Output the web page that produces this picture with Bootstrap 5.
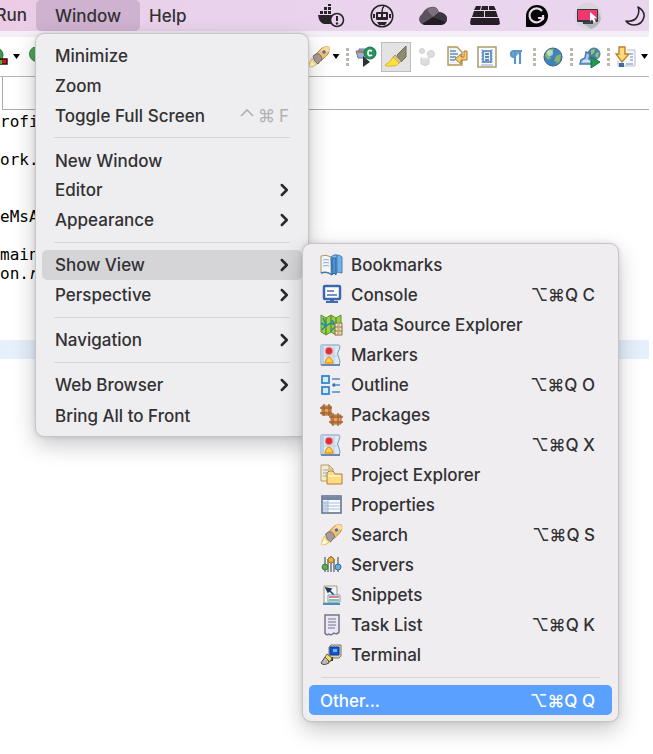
<!DOCTYPE html>
<html lang="en">
<head>
<meta charset="utf-8">
<meta name="viewport" content="width=device-width, initial-scale=1">
<title>Window menu</title>
<link href="https://cdn.jsdelivr.net/npm/bootstrap@5.3.0/dist/css/bootstrap.min.css" rel="stylesheet">
<style>
body{font-family:Inter,"Liberation Sans",sans-serif;font-size:17px;font-weight:500;line-height:30px;color:#323133;background:#fff;padding-right:4px;min-height:100vh}
svg{display:block;flex:none}
button{color:inherit;font-weight:inherit}
.menubar{height:31px;background:linear-gradient(90deg,#eccbe5,#e9d3ec 35%,#ead6ee)}
.menubar .top-item{border:0;background:none;padding:0;height:31px;line-height:30px}
.top-run{width:36px;padding-right:9px!important;overflow:hidden}
.top-window{width:104px;background:#cfb1d0!important;border-radius:5px}
.top-help{padding-left:9px!important}
.status-icons{display:grid;grid-template-columns:52px 50px 52px 52px 52px 50px 36px;align-items:center;justify-items:center;height:31px}
.status-icons button,.toolbar button{border:0;background:none;padding:0}
.status-icons button:last-child{justify-self:end;margin-right:2px}
.title-strip{height:6px;background:#f4eef6}
.toolbar{height:40px;border-bottom:1px solid #b5b5b5}
.tools{display:grid;grid-template-columns:22px 12px 10px 28px 32px 30px 30px 30px 27px 10px 28px 8px 29px 8px 28px 9px;align-items:center;justify-items:center}
.tools .pressed{width:30px;height:30px;background:#e3e3e3;border:1px solid #bdbdbd;padding:3px}
.dots{width:3px;height:18px;background:repeating-linear-gradient(#bdb8ae 0 3px,transparent 3px 5px)}
.caret{width:7px;height:5px;background:#000;clip-path:polygon(0 0,100% 0,50% 100%)}
.tab-area{height:33px;margin-left:2px;border-left:1px solid #aaa;border-bottom:1px solid #aaa}
.code{font-family:"DejaVu Sans Mono",monospace;font-size:16px;font-weight:400;line-height:19px;color:#000;margin:0;padding-top:2px}
.code div{height:19px;white-space:pre}
.code .current{background:#e6f0fc}
.dropdown-menu.mac{--bs-dropdown-bg:#eeedf0;display:block;margin:0;padding:6px;border:1px solid #c6c4c7;border-radius:9px;font-size:17px;color:#323133;box-shadow:0 8px 22px rgba(0,0,0,.22),0 0 5px rgba(0,0,0,.10)}
.mac.main-menu{top:100%;left:-1px;width:274px;margin-top:2px}
.mac.sub-menu{--bs-dropdown-bg:#efedf0;top:-7px;left:100%;width:317px}
.mac .dropdown-item{height:30px;line-height:32px;padding:0 13px;border-radius:5px;color:#323133;font-weight:500}
.mac .dropdown-item.open-item{background:#d5d5d7}
.sub-menu .dropdown-item{padding:0 17px 0 11px}
.mac .dropdown-item.chosen{background:#5aa1ff;color:#fff}
.mac .dropdown-divider{margin:7px 12px;border-top:1px solid #d5d4d7;opacity:1}
.item-icon{margin-right:8px}
.faint{color:#b1b0b3;font-weight:400}
</style>
<script src="https://cdn.jsdelivr.net/npm/bootstrap@5.3.0/dist/js/bootstrap.bundle.min.js"></script>
</head>
<body>
<svg width="0" height="0" class="position-absolute" aria-hidden="true">
  <symbol id="rocket" viewBox="0 0 22 22"><path d="M7 9 14 2q4-2 7-1 1 4-1 7l-7 7z" fill="#f4c172" stroke="#c08a3e"/><path d="M12 5 16 1q3-1 5 0 1 3 0 5z" fill="#fbdc9a"/><circle cx="16" cy="6" r="1.700" fill="#466fb5"/><path d="M5 10q3-3 6-2 3 2 3 5l-4 5q-4-2-5-8z" fill="#a79c98" stroke="#76707a"/><path d="M4 12q1 4 5 6-3 3-8 3 0-5 3-9z" fill="#fff2a4" stroke="#e9c15c"/><path d="m4 16-3 5 5-2z" fill="#fff"/></symbol>
  <symbol id="marker" viewBox="0 0 23 22"><path d="M1 1h18q2 1 0 5-3 4 0 8 2 5 0 7H1z" fill="#dceaf6" stroke="#7b9abf"/><path d="M1 1h3v20H1z" fill="#b8d0e6"/><path d="M4 12h13M14 2v18" stroke="#b7cde0"/><path d="M1 21h19" stroke="#54759f" stroke-width="1.500"/><circle cx="9" cy="7" r="3.800" fill="#e02d38" stroke="#f08d91"/><path d="M9 13q-3 1-4 6h8q-1-5-4-6z" fill="#ffd34a" stroke="#ef9422" stroke-width="1.300" stroke-linejoin="round"/></symbol>
  <symbol id="chev" viewBox="0 0 9 14"><path d="m1.800 2 5 5-5 5" fill="none" stroke="#29282a" stroke-width="2.500" stroke-linecap="round" stroke-linejoin="round"/></symbol>
</svg>

<header class="menubar d-flex justify-content-between">
  <nav class="d-flex" aria-label="Menu bar">
    <button class="top-item top-run d-flex justify-content-end">Run</button>
    <div class="position-relative">
      <button class="top-item top-window text-center" aria-expanded="true">Window</button>
      <ul class="dropdown-menu mac main-menu show">
        <li><button class="dropdown-item">Minimize</button></li>
        <li><button class="dropdown-item">Zoom</button></li>
        <li><button class="dropdown-item d-flex justify-content-between">Toggle Full Screen<span class="faint d-flex gap-1"><svg width="14" height="30" viewBox="0 0 14 30"><path d="m1 16 6-6 6 6" fill="none" stroke="#b1b0b3" stroke-width="1.600"/></svg><span>⌘</span><span>F</span></span></button></li>
        <li><hr class="dropdown-divider"></li>
        <li><button class="dropdown-item">New Window</button></li>
        <li><button class="dropdown-item d-flex justify-content-between align-items-center">Editor<svg width="9" height="14"><use href="#chev"/></svg></button></li>
        <li><button class="dropdown-item d-flex justify-content-between align-items-center">Appearance<svg width="9" height="14"><use href="#chev"/></svg></button></li>
        <li><hr class="dropdown-divider"></li>
        <li class="position-relative">
          <button class="dropdown-item open-item d-flex justify-content-between align-items-center" aria-expanded="true">Show View<svg width="9" height="14"><use href="#chev"/></svg></button>
          <ul class="dropdown-menu mac sub-menu show">
            <li><button class="dropdown-item d-flex align-items-center"><svg class="item-icon" width="23" height="22" viewBox="0 0 23 22"><path d="M1 2q5-2 10 1v17q-4-3-10-1z" fill="#f3f7fb" stroke="#b59659"/><path d="M1 19q6-2 11 2" fill="none" stroke="#3e79b7" stroke-width="1.500"/><path d="M3 6q3-1 6 0M3 9q3-1 6 0M3 12q3-1 6 0" fill="none" stroke="#8bafd2"/><path d="M11 3q3-3 6-2v18l-5 1z" fill="#87b9e6" stroke="#3b79b3"/><path d="M12 4h4v17l-2-2-2 2z" fill="#4b90d2" stroke="#296aaa"/><path d="M17 1q3 0 5 2v16l-5-1z" fill="#72b0e9" stroke="#4783b8"/></svg>Bookmarks</button></li>
            <li><button class="dropdown-item d-flex align-items-center"><svg class="item-icon" width="23" height="22" viewBox="0 0 23 22"><rect x="4" y="2" width="16" height="13" rx="1" fill="#fff" stroke="#3d67ad" stroke-width="2.500"/><path d="M7 7h7M7 11h10" stroke="#4e6ea8" stroke-width="1.500"/><path d="M10 16h4v1h4v2H6v-2h4z" fill="#406bad"/></svg>Console<span class="ms-auto">⌥⌘Q C</span></button></li>
            <li><button class="dropdown-item d-flex align-items-center"><svg class="item-icon" width="23" height="22" viewBox="0 0 23 22"><path d="m1 1 5 3 5-3 5 3 5-3v17l-5 3-5-3-5 3-5-3z" fill="#9bd044" stroke="#5c8f2b"/><path d="M6 4v17M11 1v17M16 4v17" stroke="#5c952f" stroke-width="1.500"/><path d="m1 9 5 3 5-3 5 2M3 4l3 7-4 5M12 6l4 6-5 5" fill="none" stroke="#2588a6" stroke-width="1.500"/><path d="M15 9h7v12h-7z" fill="#f0e4c2" stroke="#8a6c3d"/><path d="M15 13h7M15 17h7" stroke="#8a6c3d"/><path d="M17 11h3M17 15h3M17 19h3" stroke="#b69058"/></svg>Data Source Explorer</button></li>
            <li><button class="dropdown-item d-flex align-items-center"><svg class="item-icon" width="23" height="22"><use href="#marker"/></svg>Markers</button></li>
            <li><button class="dropdown-item d-flex align-items-center"><svg class="item-icon" width="23" height="22" viewBox="0 0 23 22"><g fill="#d3eaf9" stroke="#3787cd" stroke-width="1.800"><rect x="2" y="2" width="7" height="7"/><rect x="2" y="13" width="7" height="7"/></g><path d="M12 5h8M16 11h4M12 18h8" stroke="#478fc6" stroke-width="1.600"/><circle cx="14" cy="11" r="1.800" fill="#2e71ba"/></svg>Outline<span class="ms-auto">⌥⌘Q O</span></button></li>
            <li><button class="dropdown-item d-flex align-items-center"><svg class="item-icon" width="23" height="22" viewBox="0 0 23 22"><g fill="#dfa365" stroke="#a1622c"><path d="M2 2h9v9H2zM11 11h10v9H11z"/><path d="M4 0v12M9 0v12M0 4h12M0 9h12M13 9v13M18 9v13M9 13h14M9 18h14" stroke-width="1.300"/></g></svg>Packages</button></li>
            <li><button class="dropdown-item d-flex align-items-center"><svg class="item-icon" width="23" height="22"><use href="#marker"/></svg>Problems<span class="ms-auto">⌥⌘Q X</span></button></li>
            <li><button class="dropdown-item d-flex align-items-center"><svg class="item-icon" width="23" height="22" viewBox="0 0 23 22"><path d="M1 1h8l4 4v12H1z" fill="#f4edcf" stroke="#b79d62"/><path d="M9 1v4h4" fill="none" stroke="#b79d62"/><path d="M3 6h6M3 9h5M3 12h4" stroke="#84a6c8"/><path d="M7 20V9l2-2h4l2 3h7v10z" fill="#ffdb82" stroke="#b77d36"/><path d="M8 12h13" stroke="#fff0bc" stroke-width="2"/></svg>Project Explorer</button></li>
            <li><button class="dropdown-item d-flex align-items-center"><svg class="item-icon" width="23" height="22" viewBox="0 0 23 22"><rect x="2" y="2" width="19" height="17" fill="#f6fbff" stroke="#65758f" stroke-width="1.600"/><path d="M2 3h19v3H2z" fill="#7587a5"/><path d="M8 6v12M3 9h17M3 12h17M3 15h17" stroke="#aabdd4"/><path d="M3 7h5v11H3z" fill="#a8bed7" opacity=".55"/></svg>Properties</button></li>
            <li><button class="dropdown-item d-flex align-items-center"><svg class="item-icon" width="23" height="22"><use href="#rocket"/></svg>Search<span class="ms-auto">⌥⌘Q S</span></button></li>
            <li><button class="dropdown-item d-flex align-items-center"><svg class="item-icon" width="23" height="22" viewBox="0 0 23 22"><path d="M5 3v15M11 2v16M18 3v15M8 5v13M14 5v13" stroke="#82868f" stroke-width="1.700"/><circle cx="5" cy="13" r="2.900" fill="#62ab4f" stroke="#397e38"/><circle cx="11" cy="6" r="3" fill="#e4b13b" stroke="#9c721f"/><circle cx="18" cy="13" r="3" fill="#6baddd" stroke="#34719d"/></svg>Servers</button></li>
            <li><button class="dropdown-item d-flex align-items-center"><svg class="item-icon" width="23" height="22" viewBox="0 0 23 22"><path d="M4 2h13v17H4z" fill="#eef4f7" stroke="#a99b72"/><path d="m6 4 5 1-3 3zM8 5l6 6" fill="#26385c" stroke="#26385c" stroke-width="1.500"/><path d="M8 11h12v7H8z" fill="#fff" stroke="#71a2c5"/><path d="M9 12h10v2H9z" fill="#e27f8e"/><path d="M9 15h10v2H9z" fill="#82c6a8"/><path d="M3 19h17v2H3z" fill="#4d8dc0"/></svg>Snippets</button></li>
            <li><button class="dropdown-item d-flex align-items-center"><svg class="item-icon" width="23" height="22" viewBox="0 0 23 22"><path d="M5 1h14v17q-2 3-5 1-3 3-5 1-2 2-4-1z" fill="#e9e9f5" stroke="#777487" stroke-width="1.500"/><path d="M8 5h8M8 8h8M8 11h8M8 14h7" stroke="#77758b" stroke-width="1.200"/></svg>Task List<span class="ms-auto">⌥⌘Q K</span></button></li>
            <li><button class="dropdown-item d-flex align-items-center"><svg class="item-icon" width="23" height="22" viewBox="0 0 23 22"><path d="m9 3 2-2h10v11l-2 2H9z" fill="#d9d4bd" stroke="#77776e"/><path d="M10 3h9v8h-9z" fill="#1555d5" stroke="#12358b"/><path d="M13 5h4v3h-4z" fill="#64b9ff"/><path d="M12 13v3H8" fill="none" stroke="#333" stroke-width="2"/><path d="m5 13-4 6q2 3 8 0l-1-4z" fill="#b9b9b7" stroke="#4b4d4e"/><path d="m7 10 5 4-2 4-5-5z" fill="#ecdf67" stroke="#6d6730"/></svg>Terminal</button></li>
            <li><hr class="dropdown-divider"></li>
            <li><button class="dropdown-item chosen d-flex justify-content-between">Other...<span>⌥⌘Q Q</span></button></li>
          </ul>
        </li>
        <li><button class="dropdown-item d-flex justify-content-between align-items-center">Perspective<svg width="9" height="14"><use href="#chev"/></svg></button></li>
        <li><hr class="dropdown-divider"></li>
        <li><button class="dropdown-item d-flex justify-content-between align-items-center">Navigation<svg width="9" height="14"><use href="#chev"/></svg></button></li>
        <li><hr class="dropdown-divider"></li>
        <li><button class="dropdown-item d-flex justify-content-between align-items-center">Web Browser<svg width="9" height="14"><use href="#chev"/></svg></button></li>
        <li><button class="dropdown-item">Bring All to Front</button></li>
      </ul>
    </div>
    <button class="top-item top-help">Help</button>
  </nav>
  <div class="status-icons">
    <button aria-label="Docker"><svg width="28" height="24" viewBox="0 0 28 24"><path d="M1 11h17l2-2 3 2q-7 1-8 5 0 3 1 4H7q-5-1-6-9z" fill="#282329"/><path d="M3 7h3v3H3zM7 7h3v3H7zM11 7h3v3h-3zM7 3h3v3H7zM11 3h3v3h-3zM11 0h3v2h-3z" fill="#282329"/><circle cx="20" cy="16" r="6.500" fill="#e9d3ec" stroke="#282329" stroke-width="1.600"/><path d="M20 12v5" stroke="#282329" stroke-width="2"/><circle cx="20" cy="19.500" r="1.200" fill="#282329"/></svg></button>
    <button aria-label="Assistant"><svg width="24" height="24" viewBox="0 0 24 24"><circle cx="12" cy="12" r="10.800" fill="none" stroke="#282329" stroke-width="1.500"/><path d="M12 8q0-4 2-6" fill="none" stroke="#282329" stroke-width="1.500"/><rect x="6" y="8" width="12" height="8" rx="1" fill="#282329"/><path d="M4 10v4M20 10v4" stroke="#282329" stroke-width="2"/><path d="M8 10h3v3H8zM13 10h3v3h-3z" fill="#ead6ee"/><path d="M7 18h10l-2 3H9z" fill="#282329"/></svg></button>
    <button aria-label="Cloud"><svg width="28" height="20" viewBox="0 0 28 20"><path d="M3 8q3-6 9-7 6-1 8 5 7 1 8 6 0 7-6 7H6q-6-1-6-6 0-3 3-5z" fill="#5c515f"/><path d="M8 4q4-4 9-2 3 2 3 5l-6 4z" fill="#7d7080"/><path d="m14 11 6-5q7 1 8 6 0 3-1 4z" fill="#3d3540"/><path d="m3 18 11-7 13 5q-2 3-5 3H6z" fill="#221d24"/></svg></button>
    <button aria-label="Stack"><svg width="30" height="22" viewBox="0 0 30 22"><path d="M6 1h5l-1 4H4zM12 1h6v4h-7zM19 1h5l2 4h-7zM4 6h10v6H2zM15 6h11l2 6H15zM1 13h28l1 6-2 1H1l-1-2z" fill="#242026"/></svg></button>
    <button aria-label="Grammar checker"><svg width="24" height="24" viewBox="0 0 24 24"><path d="M1 23V12A11 11 0 1 1 12 23z" fill="#050505"/><path d="M17 7a7 7 0 1 0 1 7h-5M18 11v5" fill="none" stroke="#ead6ee" stroke-width="2.200"/></svg></button>
    <button aria-label="Screen sharing"><svg width="28" height="28" viewBox="0 0 28 28"><circle cx="14" cy="14" r="13.500" fill="#d7d5d9"/><path d="m7 20 17-12 3 9q-3 8-10 10z" fill="#aebabc"/><rect x="3" y="7" width="21" height="13" rx="1" fill="#37353f"/><path d="M4 8h19v10H4z" fill="#ee386e"/><path d="M9 20h10v2H9z" fill="#40404a"/><path d="m16 10 7 6-3 .5 2 3-2 1-2-3-2 2z" fill="#fff"/></svg></button>
    <button aria-label="Do not disturb"><svg width="22" height="20" viewBox="0 0 22 20"><path d="M13 1q7 4 6 10-2 8-10 8-5 0-8-4 8 1 11-4 3-5 1-10z" fill="none" stroke="#282329" stroke-width="1.500" stroke-linejoin="round"/></svg></button>
  </div>
</header>
<div class="title-strip"></div>
<main>
  <div class="toolbar d-flex justify-content-between">
    <div class="d-flex align-items-center">
      <button aria-label="Run external tool"><svg width="9" height="20" viewBox="0 0 9 20"><circle cx="-4" cy="8" r="7" fill="#43984c" stroke="#267038"/><path d="M0 12h7v5H0z" fill="#d51418" stroke="#301010" stroke-width="1.500"/><path d="M0 13h2v4H0z" fill="#31bd39"/></svg></button>
      <span class="caret ms-1"></span>
      <button class="ms-2" aria-label="New class"><svg width="18" height="20" viewBox="0 0 18 20"><circle cx="9" cy="7" r="7.500" fill="#4ca65b" stroke="#388543"/><path d="M8 4v7" stroke="#fff" stroke-width="2"/></svg></button>
    </div>
    <div class="tools">
      <button aria-label="Search"><svg width="22" height="22"><use href="#rocket"/></svg></button>
      <span class="caret"></span><span class="dots"></span>
      <button aria-label="Open type"><svg width="22" height="22" viewBox="0 0 22 22"><path d="M1 5h11v7H3zM4 3h7v3H4z" fill="#a1b2ce" stroke="#65789b"/><path d="M1 6h11" stroke="#b27749" stroke-width="1.500"/><circle cx="15" cy="7" r="6" fill="#25965a" stroke="#137044"/><path d="M17 5q-4-2-4 2t4 2" fill="none" stroke="#fff" stroke-width="1.800"/><path d="m8 10 7 6-7 5z" fill="#303136"/></svg></button>
      <button class="pressed" aria-label="Mark occurrences"><svg width="22" height="22" viewBox="0 0 22 22"><path d="m12 9 8-8 1-1v11l-5 5z" fill="#8f8b71" stroke="#6c6959"/><path d="m10 9 6 6-3 3-6-6z" fill="#cfc49d" stroke="#a59567"/><path d="m8 11 6 6q-2 3-6 3H1l-1-1q5-2 8-8z" fill="#ffe13d" stroke="#e0b326"/></svg></button>
      <button aria-label="Breadcrumb" disabled><svg width="18" height="20" viewBox="0 0 18 20"><g fill="#ddd" stroke="#d0d0d0"><circle cx="4" cy="4" r="2.500"/><circle cx="13" cy="7" r="3.500"/><path d="M3 11h8v6q-4 3-8 0z"/></g><path d="M4 11h6" stroke="#fff"/></svg></button>
      <button aria-label="Word wrap"><svg width="22" height="22" viewBox="0 0 22 22"><path d="M2 1h9l5 5v13H2z" fill="#edf4fa" stroke="#b39854" stroke-width="1.400"/><path d="M4 5h6M4 8h8M4 11h6M4 14h5" stroke="#6a8fb8" stroke-width="1.400"/><path d="M18 5h3v9h-6v4l-6-5 6-5v3h3z" fill="#f4ce6d" stroke="#ae7631"/></svg></button>
      <button aria-label="Block selection"><svg width="20" height="22" viewBox="0 0 20 22"><path d="M1 1h18v20H1z" fill="#fff" stroke="#a99b72" stroke-width="1.500"/><path d="M4 4h2M4 7h2M4 10h2M4 13h2M4 16h2M14 4h2M14 7h2M14 10h2M14 13h2M14 16h2M4 19h12" stroke="#8aa6c8" stroke-width="1.200"/><rect x="6" y="5" width="8" height="11" fill="#e1effb" stroke="#477eb5" stroke-width="1.500"/><path d="M8 8h4M8 11h4M8 14h4" stroke="#3c659d" stroke-width="1.300"/></svg></button>
      <button aria-label="Show whitespace"><svg width="14" height="18" viewBox="0 0 14 18"><path d="M13 3H5a3 3 0 0 0 0 6h1M6 3v13M11 3v13" fill="#74a9d7" stroke="#5d94c8" stroke-width="2.200"/></svg></button>
      <span class="dots"></span>
      <button aria-label="Web browser"><svg width="20" height="20" viewBox="0 0 20 20"><circle cx="10" cy="10" r="9" fill="#3f82bc" stroke="#376181"/><path d="M3 5q4-5 8-3l-2 4-3 1 2 4-3 2-3-4zM13 3l4 4-4 2-2 5 3 1-2 3 5-4 1-6z" fill="#83b56b"/><circle cx="7" cy="6" r="3" fill="#d8edf0" opacity=".7"/></svg></button>
      <span class="dots"></span>
      <button aria-label="Launch web service"><svg width="22" height="22" viewBox="0 0 22 22"><circle cx="15" cy="8" r="6" fill="#4582af" stroke="#4a7a93"/><path d="m12 4 4-1-1 4-3 2zM17 7l3-1-1 6-3-2z" fill="#95c46e"/><path d="m7 6 4 2-1 5 4 5H1l1-4 4-2z" fill="#a9c6e5" stroke="#4979ae" stroke-width="1.500"/><path d="M4 15h8" stroke="#fff"/><path d="m12 11 9 5-9 6z" fill="#249755" stroke="#157641"/></svg></button>
      <span class="dots"></span>
      <button aria-label="Next annotation"><svg width="22" height="22" viewBox="0 0 22 22"><path d="M12 4h8v16H3v-5" fill="#f5f7fc" stroke="#b3bdd0"/><path d="M15 8h3M15 11h3M15 14h3M11 18h7" stroke="#6c8bb5"/><path d="M4 1h6v7h4l-7 8-6-8h3z" fill="#ffda76" stroke="#b9822f" stroke-width="1.400"/><path d="M4 17h5v4H4z" fill="#41699c"/></svg></button>
      <span class="caret"></span>
    </div>
  </div>
  <div class="tab-area"></div>
  <div class="code">
    <div>rofi</div><div></div><div>ork.</div><div></div><div></div><div>eMsA</div><div></div><div>main</div><div>on.<i>r</i></div><div></div><div></div><div></div><div class="current"></div>
  </div>
</main>
</body>
</html>
